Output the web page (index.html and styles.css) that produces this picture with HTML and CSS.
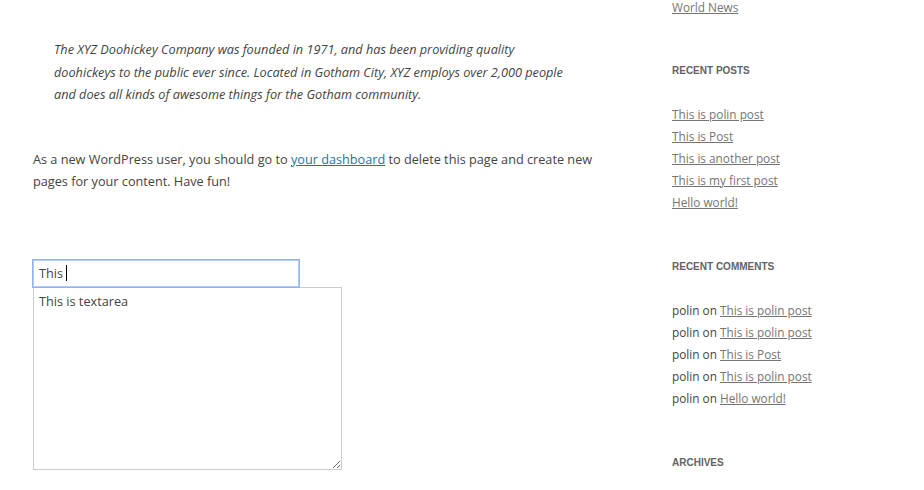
FILE: index.html
```html
<!DOCTYPE html>
<html>
<head>
<meta charset="utf-8">
<link rel="stylesheet" href="styles.css">
</head>
<body>
<div class="page">
  <main class="content">
    <blockquote class="quote">The XYZ Doohickey Company was founded in 1971, and has been providing quality doohickeys to the public ever since. Located in Gotham City, XYZ employs over 2,000 people and does all kinds of awesome things for the Gotham community.</blockquote>
    <p class="para">As a new WordPress user, you should go to <a href="#">your dashboard</a> to delete this page and create new pages for your content. Have fun!</p>
    <form class="form">
      <div class="field">This<span class="caret"></span></div>
      <textarea class="area">This is textarea</textarea>
    </form>
  </main>
  <aside class="sidebar">
    <ul class="list top"><li><a href="#">World News</a></li></ul>
    <h3 class="widget-title">Recent Posts</h3>
    <ul class="list">
      <li><a href="#">This is polin post</a></li>
      <li><a href="#">This is Post</a></li>
      <li><a href="#">This is another post</a></li>
      <li><a href="#">This is my first post</a></li>
      <li><a href="#">Hello world!</a></li>
    </ul>
    <h3 class="widget-title">Recent Comments</h3>
    <ul class="list">
      <li>polin on <a href="#">This is polin post</a></li>
      <li>polin on <a href="#">This is polin post</a></li>
      <li>polin on <a href="#">This is Post</a></li>
      <li>polin on <a href="#">This is polin post</a></li>
      <li>polin on <a href="#">Hello world!</a></li>
    </ul>
    <h3 class="widget-title">Archives</h3>
  </aside>
</div>
</body>
</html>
```
FILE: styles.css
```css
html, body {
  margin: 0;
  padding: 0;
  background: #fff;
  overflow: hidden;
}
body {
  font-family: "Open Sans", "Liberation Sans", sans-serif;
  font-size: 12.7px;
  line-height: 22px;
  color: #444;
}
.page {
  display: flex;
  height: 490px;
}
.content {
  width: 560px;
  margin-left: 33px;
  padding-top: 38px;
}
.quote {
  margin: 0;
  padding: 0 21px;
  font-style: italic;
  color: #444;
  line-height: 22.5px;
}
.para {
  margin: 42px 0 0;
}
.para a {
  color: #21759b;
  text-decoration: underline;
}
.form {
  margin-top: 67px;
  display: flex;
  flex-direction: column;
  align-items: flex-start;
}
.field {
  box-sizing: border-box;
  width: 268px;
  height: 29px;
  margin-left: -1px;
  border: 1px solid #8fb4f3;
  box-shadow: 0 0 0 1px #b3ccf7 inset;
  padding: 2px 6px 0;
  line-height: 22px;
  color: #444;
  position: relative;
  z-index: 1;
}
.caret {
  display: inline-block;
  width: 1px;
  height: 16px;
  background: #000;
  margin-left: 3px;
  vertical-align: -3px;
}
.area {
  box-sizing: border-box;
  width: 309px;
  height: 183px;
  margin: -1px 0 0;
  border: 1px solid #ccc;
  padding: 2px 5px;
  font-family: "Open Sans", "Liberation Sans", sans-serif;
  font-size: 12.7px;
  line-height: 22px;
  color: #444;
  resize: both;
  outline: none;
}
.sidebar {
  margin-left: 79px;
  width: 220px;
  font-size: 11.8px;
}
.list {
  list-style: none;
  margin: 22px 0 42px;
  padding: 0;
}
.list.top {
  margin-top: -4px;
  margin-bottom: 41px;
}
.list a {
  color: #757575;
  text-decoration: underline;
}
.widget-title {
  margin: 0;
  padding-top: 1px;
  font-family: "Liberation Sans", Arial, sans-serif;
  font-size: 10px;
  font-weight: bold;
  text-transform: uppercase;
  color: #636363;
  line-height: 21px;
  letter-spacing: 0;
}
```
